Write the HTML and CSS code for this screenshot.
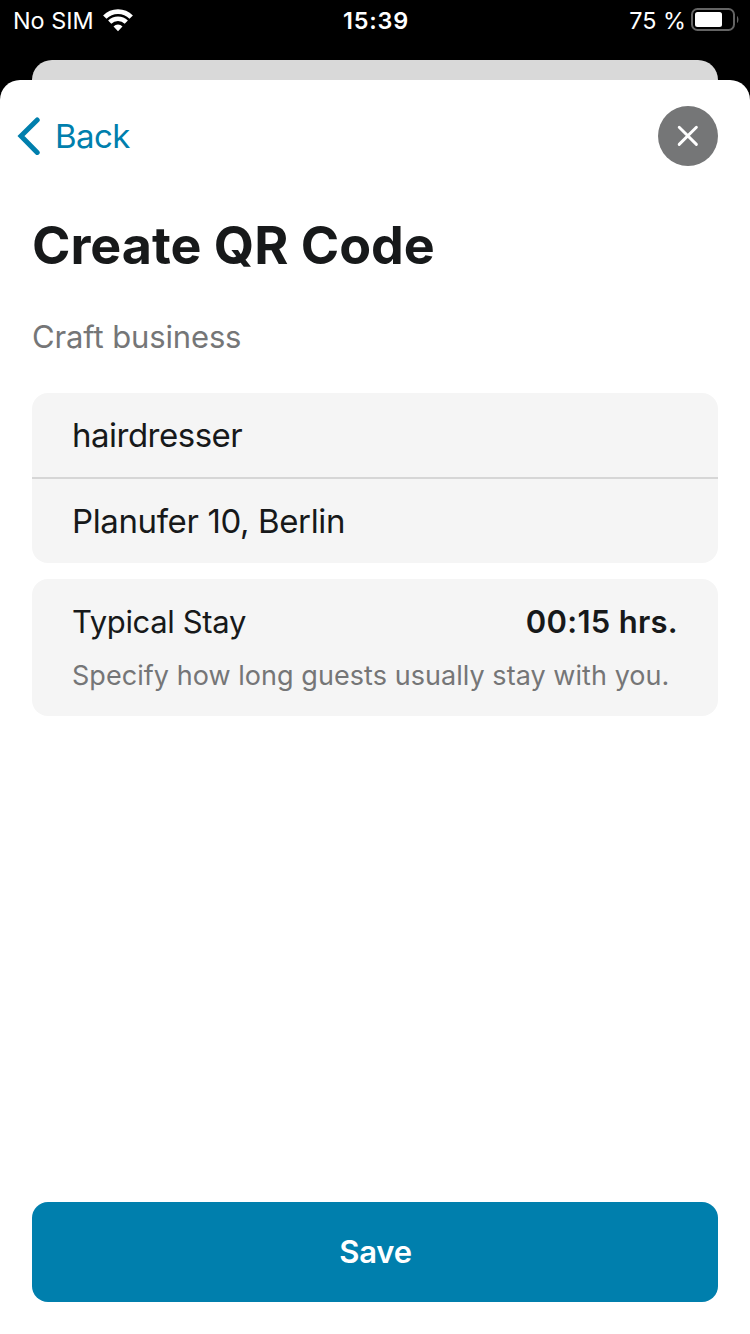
FILE: index.html
```html
<!DOCTYPE html>
<html lang="en">
<head>
<meta charset="utf-8">
<title>Create QR Code</title>
<link rel="stylesheet" href="styles.css">
</head>
<body>
<div class="screen">
  <header class="status">
    <div class="status-left">
      <span class="carrier">No SIM</span>
      <svg class="wifi" width="30" height="23" viewBox="0 0 30 23" fill="none" stroke="#fff">
        <path d="M1.8 8.1A18.6 18.6 0 0 1 28.2 8.1" stroke-width="4.8"/>
        <path d="M6.7 13.2A11.8 11.8 0 0 1 23.3 13.2" stroke-width="4.5"/>
        <path d="M10.5 17.4A6.2 6.2 0 0 1 19.5 17.4L15 22.2Z" fill="#fff" stroke="none"/>
      </svg>
    </div>
    <span class="clock">15:39</span>
    <div class="status-right">
      <span class="percent">75 %</span>
      <svg class="battery" width="48" height="24" viewBox="0 0 48 24">
        <rect x="1" y="1" width="42" height="21" rx="5.5" fill="none" stroke="#646464" stroke-width="2"/>
        <rect x="4" y="4" width="27" height="15" rx="2.5" fill="#fff"/>
        <path d="M46 8C47.9 9 47.9 14 46 15Z" fill="#646464"/>
      </svg>
    </div>
  </header>
  <div class="sheet-behind"></div>
  <main class="sheet">
    <nav class="nav">
      <a class="back">
        <svg class="chevron" width="24" height="40" viewBox="0 0 24 40" fill="none" stroke="#007fad" stroke-width="5" stroke-linecap="round" stroke-linejoin="miter"><path d="M21.2 3.9L5 20L21.2 36.4"/></svg>
        <span class="back-label">Back</span>
      </a>
      <button class="close" aria-label="Close">
        <svg width="60" height="60" viewBox="0 0 60 60" stroke="#fff" stroke-width="2.9" stroke-linecap="round"><path d="M21.2 21.2L38.4 38.4M38.4 21.2L21.2 38.4"/></svg>
      </button>
    </nav>
    <h1 class="title"><span>Create QR Code</span></h1>
    <p class="category"><span>Craft business</span></p>
    <section class="card">
      <div class="field field-name"><span>hairdresser</span></div>
      <div class="field field-address"><span>Planufer 10, Berlin</span></div>
    </section>
    <section class="card stay">
      <div class="stay-row">
        <span class="stay-label">Typical Stay</span>
        <span class="stay-value">00:15 hrs.</span>
      </div>
      <p class="hint"><span>Specify how long guests usually stay with you.</span></p>
    </section>
    <button class="save"><span>Save</span></button>
  </main>
</div>
</body>
</html>
```
FILE: styles.css
```css
* { box-sizing: border-box; margin: 0; padding: 0; }
body { background: #000; font-family: Inter, "Liberation Sans", sans-serif; color: #17191a; }
button { border: 0; font: inherit; }
.screen { width: 750px; height: 1334px; display: flex; flex-direction: column; background: #000; overflow: hidden; white-space: nowrap; }
.status { height: 60px; padding: 0 11px 0 13px; display: grid; grid-template-columns: 1fr auto 1fr; align-items: start; color: #fff; font-size: 23.4px; line-height: 41px; }
.status-left, .status-right { display: flex; }
.status-left { gap: 9.5px; }
.status-right { justify-content: flex-end; gap: 5px; }
.wifi { margin-top: 9px; }
.battery { margin-top: 8px; }
.clock { font-weight: 600; letter-spacing: 0.8px; }
.sheet-behind { height: 20px; margin: 0 32px; background: #d9d9d9; border-radius: 20px 20px 0 0; }
.sheet { flex: 1; display: flex; flex-direction: column; padding: 26px 32px 32px; background: #fff; border-radius: 20px 20px 0 0; }
.nav { display: flex; justify-content: space-between; align-items: center; height: 60px; margin-left: -16px; }
.back { display: flex; align-items: center; gap: 15px; color: #007fad; font-size: 33px; line-height: 40px; letter-spacing: -0.6px; }
.close { width: 60px; height: 60px; border-radius: 50%; background: #757677; }
.close svg { display: block; }
.title { margin-top: 49px; font-size: 52px; line-height: 62px; font-weight: 700; }
.category { margin-top: 40px; color: #757677; font-size: 31px; line-height: 40px; letter-spacing: -0.14px; }
.card { background: #f5f5f5; border-radius: 16px; margin-top: 36px; }
.field { padding: 0 40px; font-size: 33px; line-height: 84px; letter-spacing: -0.38px; }
.field-name { height: 86px; border-bottom: 2px solid #d6d6d6; letter-spacing: -0.5px; }
.field-address { height: 84px; }
.stay { height: 137px; margin-top: 16px; padding: 23px 40px 0; }
.stay-row { display: flex; justify-content: space-between; font-size: 31px; line-height: 40px; }
.stay-label { letter-spacing: -0.35px; }
.stay-value { font-weight: 600; letter-spacing: 0.28px; }
.hint { margin-top: 14px; color: #757677; font-size: 27px; line-height: 40px; letter-spacing: 0.05px; }
.save { height: 100px; margin-top: auto; border-radius: 16px; background: #007fad; color: #fff; font-size: 31px; font-weight: 600; line-height: 100px; padding-left: 1px; letter-spacing: -0.2px; }
```
